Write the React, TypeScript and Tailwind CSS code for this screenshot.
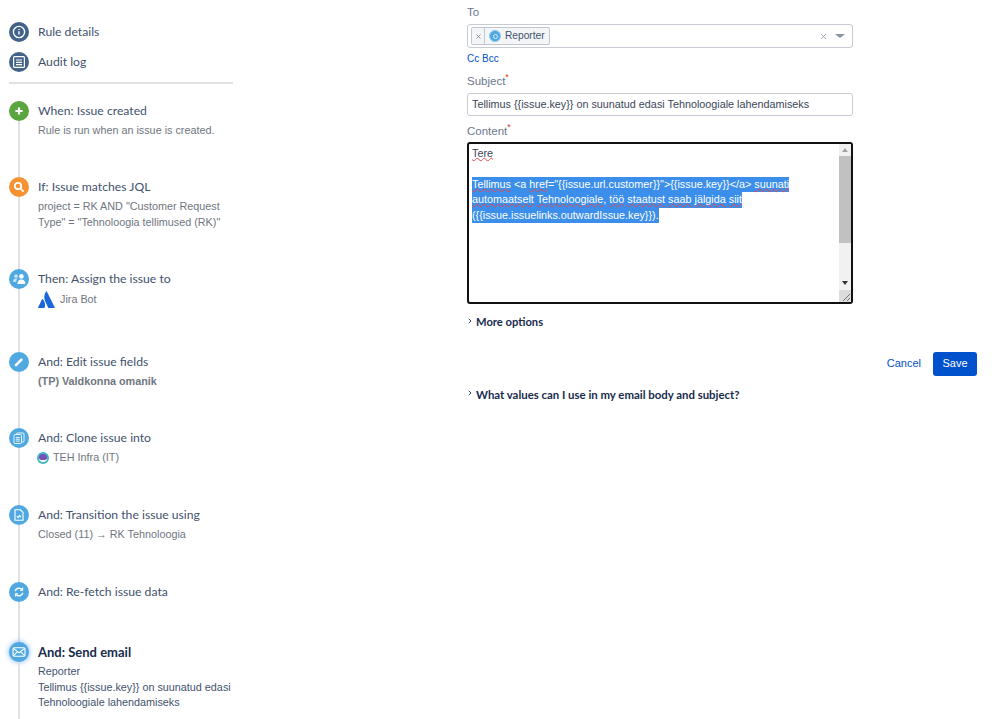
import type { ReactNode } from 'react';
import { ChevronRight, X } from 'lucide-react';

const uiFont = "font-['Lato','Noto_Sans',sans-serif]";
const arial = "font-['Liberation_Sans',Arial,sans-serif]";

const InfoIcon = () => (
  <svg viewBox="0 0 20 20" className="w-5 h-5" fill="none" stroke="#fff" strokeWidth="1.4">
    <circle cx="10" cy="10" r="5.6" />
    <path d="M10 9.2v3.4M10 7v1" />
  </svg>
);

const LogIcon = () => (
  <svg viewBox="0 0 20 20" className="w-5 h-5" fill="none" stroke="#fff" strokeWidth="1.2">
    <rect x="4.6" y="4.6" width="10.8" height="10.8" rx="1" />
    <path d="M7 8h6M7 10.4h6M7 12.6h6" />
  </svg>
);

const PlusIcon = () => (
  <svg viewBox="0 0 20 20" className="w-5 h-5" fill="none" stroke="#fff" strokeWidth="2.2">
    <path d="M10 6.4v7.2M6.4 10h7.2" />
  </svg>
);

const SearchIcon = () => (
  <svg viewBox="0 0 20 20" className="w-5 h-5" fill="none" stroke="#fff" strokeWidth="1.8">
    <circle cx="9" cy="9" r="3.2" />
    <path d="M11.4 11.4l3.2 3.2" />
  </svg>
);

const PeopleIcon = () => (
  <svg viewBox="0 0 20 20" className="w-5 h-5" fill="#fff">
    <circle cx="12.4" cy="7.4" r="2.3" />
    <path d="M8.4 15c0-3 1.5-4.6 4-4.6s4 1.6 4 4.6z" />
    <path d="M7 5.2a1.9 1.9 0 1 1 0 3.8 1.9 1.9 0 0 1 0-3.8zM4 13c0-2.400 1.100-3.500 3-3.500.5 0 1 .1 1.400.3-.8.8-1.200 1.900-1.300 3.200z" fillOpacity=".65" />
  </svg>
);

const PencilIcon = () => (
  <svg viewBox="0 0 20 20" className="w-5 h-5" fill="none" stroke="#fff" strokeWidth="2.6">
    <path d="M6.200 13.800l7-7" />
  </svg>
);

const CloneIcon = () => (
  <svg viewBox="0 0 20 20" className="w-5 h-5" fill="none" stroke="#fff" strokeOpacity=".85" strokeWidth="1">
    <rect x="7.500" y="5" width="7.500" height="9" rx="1" />
    <rect x="5" y="6.500" width="7.500" height="9" rx="1" fill="#4fa9e0" />
    <path d="M6.800 9.500h4M6.800 11.300h4M6.800 13.100h4" />
  </svg>
);

const TransitionIcon = () => (
  <svg viewBox="0 0 20 20" className="w-5 h-5" fill="none" stroke="#fff" strokeWidth="1.1">
    <path d="M6 4.800h5.400L14 7.400v7.800H6z" />
    <path d="M7.800 11.200l1.400 1.400 1.300-2 1.500 1.400" />
  </svg>
);

const RefreshIcon = () => (
  <svg viewBox="0 0 20 20" className="w-5 h-5" fill="none" stroke="#fff" strokeWidth="1.5">
    <path d="M6.200 9.200A3.900 3.900 0 0 1 13 7.600M13.800 10.800A3.900 3.900 0 0 1 7 12.400" />
    <path d="M13.600 5.600v2.600H11M6.400 14.400v-2.600H9" strokeWidth="1.100" />
  </svg>
);

const MailIcon = () => (
  <svg viewBox="0 0 20 20" className="w-5 h-5" fill="none" stroke="#fff" strokeWidth="1.1">
    <rect x="4" y="5.800" width="12" height="8.400" rx="1.200" />
    <path d="M4.400 6.400L10 10.800l5.600-4.400M4.600 13.600l3.800-4M15.400 13.600l-3.800-4" />
  </svg>
);

const AtlassianLogo = () => (
  <svg viewBox="0 0 17 17" className="w-[17px] h-[17px]" fill="#1868db">
    <path d="M4.900 8.200c-.2-.3-.6-.3-.8.100L.1 16.300c-.2.300.1.700.4.700h5.600c.2 0 .3-.1.400-.3 1.200-2.500.5-6.300-1.600-8.500z" />
    <path d="M8 .6C5.800 4 5.900 7.800 7.300 10.600l2.900 6.100c.1.200.2.300.4.300h5.700c.4 0 .6-.4.400-.7L8.800.6C8.600.2 8.200.2 8 .6z" />
  </svg>
);

const ProjectIcon = () => (
  <span className="-ml-px w-3 h-3 shrink-0 rounded-full bg-[#3fb8c4] flex items-center justify-center">
    <span className="w-2 h-2 rounded-full bg-[#7a4fb5] border-b-2 border-white" />
  </span>
);

const ResizeGrip = () => (
  <svg viewBox="0 0 12 12" className="w-full h-full" fill="none" stroke="#777" strokeWidth="1">
    <path d="M11 4L4 11M11 8l-3 3" />
  </svg>
);

const NavItem = ({ icon, label }: { icon: ReactNode; label: string }) => (
  <div className="flex items-center h-[30px]">
    <span className="w-5 h-5 rounded-full bg-[#42628a] flex items-center justify-center">{icon}</span>
    <span className={`ml-[9px] text-[12.200px] text-[#42526e] ${uiFont}`}>{label}</span>
  </div>
);

interface StepProps {
  icon: ReactNode;
  color: string;
  title: string;
  height: string;
  active?: boolean;
  children?: ReactNode;
}

const Step = ({ icon, color, title, height, active = false, children }: StepProps) => (
  <div className={`flex ${height}`}>
    <div className="w-5 flex flex-col items-center">
      <span className={`w-5 h-5 shrink-0 rounded-full flex items-center justify-center ${color} ${active ? 'shadow-[0_0_4px_1px_rgba(76,154,255,0.5)]' : ''}`}>
        {icon}
      </span>
      <span className="w-[2px] flex-1 bg-[#dfe1e6]" />
    </div>
    <div className="ml-[9px] min-w-0 flex-1">
      <div className={`h-5 leading-5 whitespace-nowrap ${uiFont} ${active ? 'text-[13px] font-bold text-[#172b4d]' : 'text-[12.200px] text-[#42526e]'}`}>{title}</div>
      {children}
    </div>
  </div>
);

const subText = `text-[10.800px] leading-[15.500px] text-[#6f7680] ${arial}`;

const fieldLabel = `text-[11.500px] leading-[14px] text-[#6b778c] ${arial}`;

const Sidebar = () => (
  <aside className="w-[224px] ml-[9px] shrink-0 pt-[17px]">
    <NavItem icon={<InfoIcon />} label="Rule details" />
    <NavItem icon={<LogIcon />} label="Audit log" />
    <div className="h-[2px] mt-[5px] bg-[#dfe1e6]" />
    <div className="mt-[17px]">
      <Step icon={<PlusIcon />} color="bg-[#5aa53e]" title="When: Issue created" height="h-[76px]">
        <p className={`${subText} mt-[2px]`}>Rule is run when an issue is created.</p>
      </Step>
      <Step icon={<SearchIcon />} color="bg-[#f79232]" title="If: Issue matches JQL" height="h-[92px]">
        <p className={`${subText} mt-[2px]`}>project = RK AND "Customer Request Type" = "Tehnoloogia tellimused (RK)"</p>
      </Step>
      <Step icon={<PeopleIcon />} color="bg-[#4fa9e0]" title="Then: Assign the issue to" height="h-[83px]">
        <div className={`flex items-center gap-[5px] ${subText} mt-[2px]`}>
          <AtlassianLogo />
          <span>Jira Bot</span>
        </div>
      </Step>
      <Step icon={<PencilIcon />} color="bg-[#4fa9e0]" title="And: Edit issue fields" height="h-[76px]">
        <p className={`${subText} font-bold mt-[2px]`}>(TP) Valdkonna omanik</p>
      </Step>
      <Step icon={<CloneIcon />} color="bg-[#4fa9e0]" title="And: Clone issue into" height="h-[77px]">
        <div className={`flex items-center gap-[4px] ${subText} mt-[2px]`}>
          <ProjectIcon />
          <span>TEH Infra (IT)</span>
        </div>
      </Step>
      <Step icon={<TransitionIcon />} color="bg-[#4fa9e0]" title="And: Transition the issue using" height="h-[77px]">
        <p className={`${subText} mt-[2px]`}>Closed (11) → RK Tehnoloogia</p>
      </Step>
      <Step icon={<RefreshIcon />} color="bg-[#4fa9e0]" title="And: Re-fetch issue data" height="h-[60px]" />
      <Step icon={<MailIcon />} color="bg-[#4fa9e0]" title="And: Send email" height="h-[80px]" active>
        <div className={`${subText} !text-[#42526e] mt-[2px]`}>
          <p>Reporter</p>
          <p>{'Tellimus {{issue.key}} on suunatud edasi'}</p>
          <p>Tehnoloogiale lahendamiseks</p>
        </div>
      </Step>
    </div>
  </aside>
);

const Misspelled = ({ children }: { children: ReactNode }) => (
  <span className="underline decoration-wavy decoration-[#e5484d] decoration-1 underline-offset-[0px] [text-decoration-skip-ink:none]">{children}</span>
);

const Selected = ({ children }: { children: ReactNode }) => (
  <span className="inline-block bg-[#3b8eea] text-white">{children}</span>
);

const EmailForm = () => (
  <main className="w-[510px] ml-[234px] shrink-0 pt-[5px]">
    <div className="w-[386px]">
      <div className={fieldLabel}>To</div>
      <div className="mt-[5px] h-[24px] rounded-[3px] border border-[#c7ccd4] flex items-center pl-[3px] pr-[7px]">
        <div className="h-[18px] flex items-center rounded-[2px] border border-[#c1c7d0] bg-[#f4f5f7]">
          <span className="w-[13px] h-full flex items-center justify-center border-r border-[#c1c7d0]">
            <X size={7} strokeWidth={2.500} className="text-[#6b778c]" />
          </span>
          <span className="ml-[4px] w-[12px] h-[12px] rounded-full bg-[#4fa9e0] border border-[#8cc8ee] flex items-center justify-center">
            <span className="w-[5px] h-[5px] rounded-full border border-[#d5ecfa]" />
          </span>
          <span className={`ml-[4px] pr-[4px] text-[10.200px] text-[#42526e] ${arial}`}>Reporter</span>
        </div>
        <X size={9} strokeWidth={2} className="ml-auto text-[#8993a4]" />
        <span className="ml-[7px] w-0 h-0 border-x-[5px] border-x-transparent border-t-[4px] border-t-[#8993a4]" />
      </div>
      <div className={`mt-[4px] text-[10px] leading-[13px] text-[#0052cc] ${arial}`}>Cc Bcc</div>
      <div className={`mt-[8px] ${fieldLabel}`}>Subject<span className="text-[#de350b] align-super text-[9px] leading-none">*</span></div>
      <div className={`mt-[5px] h-[23px] px-[4px] rounded-[3px] border border-[#c7ccd4] flex items-center text-[10.800px] text-[#3b4658] ${arial}`}>
        {'Tellimus {{issue.key}} on suunatud edasi Tehnoloogiale lahendamiseks'}
      </div>
      <div className={`mt-[7px] ${fieldLabel}`}>Content<span className="text-[#de350b] align-super text-[9px] leading-none">*</span></div>
      <div className="mt-[4px] h-[162px] rounded-[3px] border-2 border-[#111] flex overflow-hidden">
        <div className={`flex-1 px-[3px] pt-[2px] text-[10.800px] leading-[15.500px] text-[#3b4658] ${arial}`}>
          <p><Misspelled>Tere</Misspelled></p>
          <p className="mt-[15.500px]">
            <Selected><Misspelled>Tellimus</Misspelled> &lt;a <Misspelled>href</Misspelled>="{'{{issue.url.customer}}'}"&gt;{'{{issue.key}}'}&lt;/a&gt; <Misspelled>suunati</Misspelled></Selected>
            <br />
            <Selected><Misspelled>automaatselt</Misspelled> <Misspelled>Tehnoloogiale</Misspelled>, <Misspelled>töö</Misspelled> <Misspelled>staatust</Misspelled> <Misspelled>saab</Misspelled> <Misspelled>jälgida</Misspelled> <Misspelled>siit</Misspelled></Selected>
            <br />
            <Selected>({'{{issue.issuelinks.outwardIssue.key}}'}).</Selected>
          </p>
        </div>
        <div className="w-[12px] flex flex-col bg-[#f1f1f1] items-center">
          <span className="h-[12px] flex items-center">
            <span className="w-0 h-0 border-x-[3px] border-x-transparent border-b-[4px] border-b-[#a3a3a3]" />
          </span>
          <span className="w-full h-[87px] bg-[#c1c1c1]" />
          <span className="mt-auto h-[14px] flex items-center">
            <span className="w-0 h-0 border-x-[3px] border-x-transparent border-t-[4px] border-t-[#333]" />
          </span>
          <span className="w-full h-[12px] bg-[#dcdcdc]">
            <ResizeGrip />
          </span>
        </div>
      </div>
    </div>
    <div className="mt-[12px] h-[14px] flex items-center">
      <ChevronRight size={8} strokeWidth={2.500} className="mb-[4px] ml-[-1px] text-[#172b4d]" />
      <span className={`ml-[2px] text-[11.200px] font-bold text-[#172b4d] ${uiFont}`}>More options</span>
    </div>
    <div className="mt-[22px] flex items-center justify-end">
      <span className={`text-[11px] text-[#0052cc] ${arial}`}>Cancel</span>
      <button className={`ml-[12px] w-[44px] h-[24px] rounded-[3px] bg-[#0052cc] text-white text-[11px] ${arial}`}>Save</button>
    </div>
    <div className="mt-[12px] h-[14px] flex items-center">
      <ChevronRight size={8} strokeWidth={2.500} className="mb-[4px] ml-[-1px] text-[#172b4d]" />
      <span className={`ml-[2px] text-[11.400px] font-bold text-[#172b4d] ${uiFont}`}>What values can I use in my email body and subject?</span>
    </div>
  </main>
);

export default function App() {
  return (
    <div className="h-[719px] w-[999px] overflow-hidden bg-white flex">
      <Sidebar />
      <EmailForm />
    </div>
  );
}
